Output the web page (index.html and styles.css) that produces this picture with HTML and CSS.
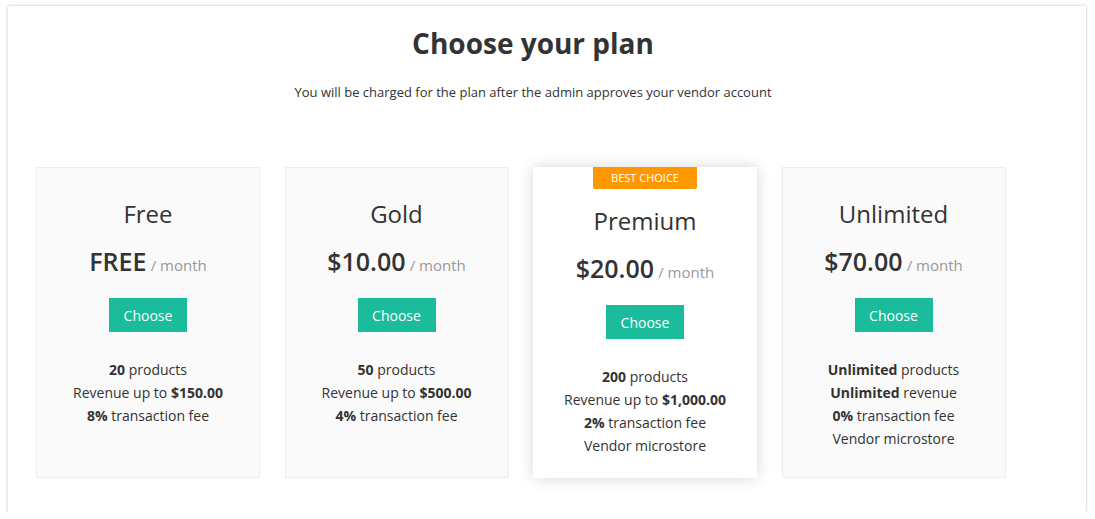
FILE: index.html
```html
<!DOCTYPE html>
<html>
<head>
<meta charset="utf-8">
<link rel="stylesheet" href="styles.css">
</head>
<body>
<div class="page">
  <div class="box">
    <div class="inner">
      <h1 class="title">Choose your plan</h1>
      <p class="subtitle">You will be charged for the plan after the admin approves your vendor account</p>
      <div class="plans">
        <div class="plan">
          <div class="plan-name">Free</div>
          <div class="plan-price"><span class="amount">FREE</span> <span class="period">/ month</span></div>
          <button class="choose">Choose</button>
          <ul class="features">
            <li><b>20</b> products</li>
            <li>Revenue up to <b>$150.00</b></li>
            <li><b>8%</b> transaction fee</li>
          </ul>
        </div>
        <div class="plan">
          <div class="plan-name">Gold</div>
          <div class="plan-price"><span class="amount">$10.00</span> <span class="period">/ month</span></div>
          <button class="choose">Choose</button>
          <ul class="features">
            <li><b>50</b> products</li>
            <li>Revenue up to <b>$500.00</b></li>
            <li><b>4%</b> transaction fee</li>
          </ul>
        </div>
        <div class="plan plan-featured">
          <span class="badge">BEST CHOICE</span>
          <div class="plan-name">Premium</div>
          <div class="plan-price"><span class="amount">$20.00</span> <span class="period">/ month</span></div>
          <button class="choose">Choose</button>
          <ul class="features">
            <li><b>200</b> products</li>
            <li>Revenue up to <b>$1,000.00</b></li>
            <li><b>2%</b> transaction fee</li>
            <li>Vendor microstore</li>
          </ul>
        </div>
        <div class="plan">
          <div class="plan-name">Unlimited</div>
          <div class="plan-price"><span class="amount">$70.00</span> <span class="period">/ month</span></div>
          <button class="choose">Choose</button>
          <ul class="features">
            <li><b>Unlimited</b> products</li>
            <li><b>Unlimited</b> revenue</li>
            <li><b>0%</b> transaction fee</li>
            <li>Vendor microstore</li>
          </ul>
        </div>
      </div>
    </div>
  </div>
</div>
</body>
</html>
```
FILE: styles.css
```css
* { box-sizing: border-box; }
html, body { margin: 0; padding: 0; background: #fff; }
body {
  font-family: "Open Sans", "Liberation Sans", sans-serif;
  color: #333;
}
.page {
  padding: 6px 9px 0 8px;
}
.box {
  width: 1078px;
  height: 506px;
  background: #fff;
  box-shadow: 0 0 3px rgba(0, 0, 0, 0.25);
  padding: 20px 56px 0 28px;
}
.inner { width: 994px; }
.title {
  margin: 0;
  font-size: 28px;
  line-height: 34px;
  font-weight: 700;
  text-align: center;
  color: #333;
}
.subtitle {
  margin: 22px 0 0;
  font-size: 13px;
  line-height: 20px;
  text-align: center;
  color: #333;
}
.plans {
  display: flex;
  gap: 24.5px;
  margin-top: 65px;
}
.plan {
  position: relative;
  width: 224px;
  height: 311px;
  background: #fafafa;
  border: 1px solid #eee;
  padding-top: 30px;
  text-align: center;
}
.plan-featured {
  background: #fff;
  border-color: #fff;
  padding-top: 37px;
  box-shadow: 0 0 14px rgba(0, 0, 0, 0.16);
}
.badge {
  position: absolute;
  top: -1px;
  left: 50%;
  transform: translateX(-50%);
  width: 104px;
  height: 22px;
  line-height: 22px;
  background: #ff9800;
  color: #fff;
  font-size: 11px;
  border-radius: 0 0 2px 2px;
}
.plan-name {
  font-size: 24px;
  line-height: 32px;
  font-weight: 400;
}
.plan-price {
  margin-top: 14px;
  line-height: 34px;
}
.amount {
  font-size: 25px;
  font-weight: 600;
}
.period {
  font-size: 15px;
  color: #999;
}
.choose {
  display: block;
  margin: 16px auto 0;
  width: 78px;
  height: 34px;
  border: 0;
  border-radius: 0;
  background: #1abc9c;
  color: #fff;
  font-family: inherit;
  font-size: 14px;
  padding: 0;
}
.features {
  list-style: none;
  margin: 26px 0 0;
  padding: 0;
  font-size: 14px;
  line-height: 23px;
}
.features b { font-weight: 700; }
```
